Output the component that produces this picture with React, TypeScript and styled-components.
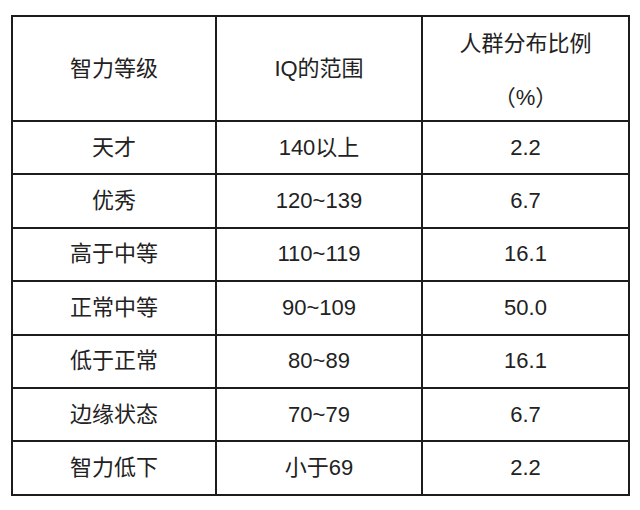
import React from "react";
import styled, { createGlobalStyle } from "styled-components";

const GlobalStyle = createGlobalStyle`
  html, body {
    margin: 0;
    padding: 0;
    background: #ffffff;
  }
`;

const Page = styled.div`
  width: 640px;
  height: 510px;
  padding: 15px 0 0 11px;
  box-sizing: border-box;
  background: #ffffff;
`;

const Table = styled.table`
  border-collapse: collapse;
  table-layout: fixed;
  width: 617px;
  font-family: "Liberation Sans", "Noto Sans CJK SC", sans-serif;
  font-size: 22px;
  color: #222222;
`;

const Col = styled.col<{ $w: number }>`
  width: ${(p) => p.$w}px;
`;

const HeadCell = styled.th`
  height: 103px;
  border: 2px solid #1c1c1c;
  font-weight: 400;
  text-align: center;
  vertical-align: middle;
  padding: 0;
  line-height: 22px;
`;

const HeadLines = styled.div<{ $pad?: number }>`
  display: flex;
  flex-direction: column;
  align-items: center;
  gap: 32px;
  padding-top: ${(p) => p.$pad ?? 0}px;
`;

const Cell = styled.td`
  height: 51.4px;
  border: 2px solid #1c1c1c;
  text-align: center;
  vertical-align: middle;
  padding: 0;
  line-height: 22px;
`;

const rows: [string, string, string][] = [
  ["天才", "140以上", "2.2"],
  ["优秀", "120~139", "6.7"],
  ["高于中等", "110~119", "16.1"],
  ["正常中等", "90~109", "50.0"],
  ["低于正常", "80~89", "16.1"],
  ["边缘状态", "70~79", "6.7"],
  ["智力低下", "小于69", "2.2"],
];

export default function App() {
  return (
    <React.Fragment>
      <GlobalStyle />
      <Page>
        <Table>
          <colgroup>
            <Col $w={204} />
            <Col $w={206} />
            <Col $w={207} />
          </colgroup>
          <thead>
            <tr>
              <HeadCell>智力等级</HeadCell>
              <HeadCell>IQ的范围</HeadCell>
              <HeadCell>
                <HeadLines $pad={4}>
                  <span>人群分布比例</span>
                  <span>（%）</span>
                </HeadLines>
              </HeadCell>
            </tr>
          </thead>
          <tbody>
            {rows.map(([level, range, share]) => (
              <tr key={level}>
                <Cell>{level}</Cell>
                <Cell>{range}</Cell>
                <Cell>{share}</Cell>
              </tr>
            ))}
          </tbody>
        </Table>
      </Page>
    </React.Fragment>
  );
}
